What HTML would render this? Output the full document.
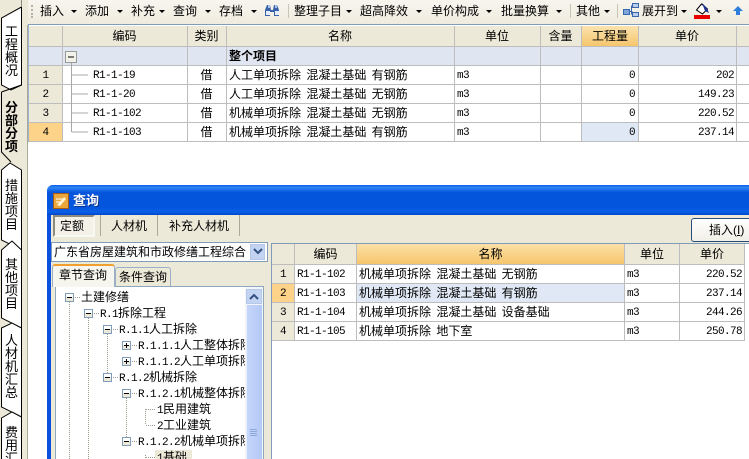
<!DOCTYPE html>
<html><head><meta charset="utf-8"><style>
html,body{margin:0;padding:0;width:749px;height:459px;overflow:hidden}
body{position:relative;background:#fff;font:12px/14px "Liberation Sans","WenQuanYi Zen Hei","Noto Sans CJK SC",sans-serif;color:#000}
div,span{position:absolute;white-space:nowrap}
svg{position:absolute}
.m{font-family:"Liberation Mono","WenQuanYi Zen Hei",monospace;font-size:11px;letter-spacing:-.6px}
.s{position:static}
.h{background:#ece9d8}
.c{text-align:center}
.r{text-align:right}
.ln{background:#bdbdbd}
.vt{left:5px;width:13px;font-family:"WenQuanYi Zen Hei","Noto Sans CJK SC",sans-serif;line-height:13px;font-size:13px;white-space:normal;text-align:center}
#wrap{left:0;top:0;width:749px;height:459px;overflow:hidden}
</style></head><body><div id="wrap">

<!-- toolbar -->
<div style="left:28px;top:0;width:721px;height:24px;background:linear-gradient(#f7f5ee,#efecdf)"></div>
<div style="left:28px;top:24px;width:721px;height:1px;background:#7f9db9"></div>
<svg width="749" height="24" style="left:0;top:0">
<g fill="#b5b2a4"><rect x="31" y="5" width="2" height="2"/><rect x="31" y="9" width="2" height="2"/><rect x="31" y="13" width="2" height="2"/><rect x="31" y="16" width="2" height="2"/></g>
<g fill="#000"><path d="M71 10h6l-3 3z"/><path d="M117 10h6l-3 3z"/><path d="M159 10h6l-3 3z"/><path d="M205 10h6l-3 3z"/><path d="M251 10h6l-3 3z"/><path d="M346 10h6l-3 3z"/><path d="M416 10h6l-3 3z"/><path d="M486 10h6l-3 3z"/><path d="M556 10h6l-3 3z"/><path d="M604 10h6l-3 3z"/><path d="M681 10h6l-3 3z"/><path d="M716 10h6l-3 3z"/></g>
<g fill="#c8c5b6"><rect x="288" y="4" width="1" height="14"/><rect x="570" y="4" width="1" height="14"/><rect x="617" y="4" width="1" height="14"/></g>
<!-- binoculars -->
<path d="M265 16v-6l2-5h3l1 5h2l1-5h3l2 5v6h-5v-4h-4v4z" fill="#3a62a8"/><rect x="266" y="11" width="4" height="4" fill="#e4edf9"/><rect x="275" y="11" width="4" height="4" fill="#e4edf9"/><rect x="268" y="5" width="2" height="3" fill="#a9c4ea"/><rect x="275" y="5" width="2" height="3" fill="#a9c4ea"/>
<!-- tree icon -->
<rect x="623.5" y="9.5" width="6" height="5" fill="#7fa6dc" stroke="#3a66ad"/><rect x="632.5" y="3.5" width="6" height="4" fill="#b9cdec" stroke="#3a66ad"/><rect x="632.5" y="12.5" width="6" height="4" fill="#b9cdec" stroke="#3a66ad"/><path d="M630 11.5h2.5M631.5 5.5v9" stroke="#3a66ad" fill="none"/>
<!-- paint bucket -->
<path d="M696.5 10l5-6 6 5-5 5z" fill="#fff" stroke="#000"/><path d="M702 3l5 5 2 5-4-2z" fill="#1d2f8a"/><rect x="694" y="15" width="16" height="4" fill="#e80000"/>
<!-- up arrow -->
<path d="M738 6l-5 5h3v4h4v-4h3z" fill="#2e7fdc"/>
</svg>
<div style="left:40px;top:4px">插入</div>
<div style="left:85px;top:4px">添加</div>
<div style="left:131px;top:4px">补充</div>
<div style="left:173px;top:4px">查询</div>
<div style="left:219px;top:4px">存档</div>
<div style="left:294px;top:4px">整理子目</div>
<div style="left:360px;top:4px">超高降效</div>
<div style="left:431px;top:4px">单价构成</div>
<div style="left:501px;top:4px">批量换算</div>
<div style="left:576px;top:4px">其他</div>
<div style="left:642px;top:4px">展开到</div>

<!-- left tabs -->
<div style="left:0;top:0;width:28px;height:459px;background:#ece9d8"></div>
<div style="left:27px;top:25px;width:1px;height:434px;background:#a9a99a"></div>
<svg width="28" height="459" style="left:0;top:0">
<path d="M21.5 7L1.5 18V85L11 90 21.5 85z" fill="#fff" stroke="#000"/>
<path d="M21.5 0V7" stroke="#8a8a80"/>
<path d="M21.5 85L1.5 92" fill="none" stroke="#000"/>
<path d="M1.5 92V152L11 162" fill="none" stroke="#000"/>
<path d="M1.5 170L10 163 21.5 170V250L1.5 240z" fill="#fff" stroke="#000"/>
<path d="M1.5 250L12 241 21.5 250V328L1.5 318z" fill="#fff" stroke="#000"/>
<path d="M1.5 328L12 323 21.5 328V417L1.5 407z" fill="#fff" stroke="#000"/>
<path d="M1.5 418L12 412 21.5 417V470H1.5z" fill="#fff" stroke="#000"/>
</svg>
<div class="vt" style="top:24px">工程概况</div>
<div class="vt" style="top:100px;font-weight:bold">分部分项</div>
<div class="vt" style="top:178px">措施项目</div>
<div class="vt" style="top:257px">其他项目</div>
<div class="vt" style="top:333px">人材机汇总</div>
<div class="vt" style="top:425px">费用汇总</div>

<!-- main grid -->
<div class="h" style="left:29px;top:26px;width:720px;height:20px"></div>
<div style="left:29px;top:47px;width:720px;height:18px;background:#dfe6f1"></div>
<div class="h" style="left:29px;top:66px;width:33px;height:56px"></div>
<div style="left:29px;top:123px;width:33px;height:18px;background:#fdd38a"></div>
<div style="left:582px;top:26px;width:56px;height:20px;background:linear-gradient(#fbe3ae,#f6c66d)"></div>
<div style="left:582px;top:123px;width:56px;height:18px;background:#dfe8f4"></div>
<div style="left:28px;top:25px;width:1px;height:117px;background:#9db4cf"></div>
<div class="ln" style="left:29px;top:46px;width:720px;height:1px"></div>
<div class="ln" style="left:29px;top:65px;width:720px;height:1px"></div>
<div class="ln" style="left:29px;top:84px;width:720px;height:1px"></div>
<div class="ln" style="left:29px;top:103px;width:720px;height:1px"></div>
<div class="ln" style="left:29px;top:122px;width:720px;height:1px"></div>
<div class="ln" style="left:29px;top:141px;width:720px;height:1px"></div>
<div class="ln" style="left:62px;top:26px;width:1px;height:116px"></div>
<div class="ln" style="left:187px;top:26px;width:1px;height:116px"></div>
<div class="ln" style="left:226px;top:26px;width:1px;height:116px"></div>
<div class="ln" style="left:454px;top:26px;width:1px;height:116px"></div>
<div class="ln" style="left:540px;top:26px;width:1px;height:116px"></div>
<div class="ln" style="left:581px;top:26px;width:1px;height:116px"></div>
<div class="ln" style="left:638px;top:26px;width:1px;height:116px"></div>
<div class="ln" style="left:736px;top:26px;width:1px;height:116px"></div>
<div class="c" style="left:62px;top:29px;width:125px">编码</div>
<div class="c" style="left:187px;top:29px;width:39px">类别</div>
<div class="c" style="left:226px;top:29px;width:228px">名称</div>
<div class="c" style="left:454px;top:29px;width:86px">单位</div>
<div class="c" style="left:540px;top:29px;width:41px">含量</div>
<div class="c" style="left:582px;top:29px;width:56px">工程量</div>
<div class="c" style="left:638px;top:29px;width:98px">单价</div>
<svg width="60" height="90" style="left:62px;top:50px">
<rect x="3.5" y="1.5" width="11" height="11" fill="#f2f2ea" stroke="#9a9a9a"/><path d="M6 7h6" stroke="#000"/>
<path d="M9.5 13V82M9.5 25H26M9.5 44H26M9.5 63H26M9.5 82H26" stroke="#a8a8a8" fill="none"/>
</svg>
<div style="left:229px;top:49px;font-weight:bold">整个项目</div>

<div class="m c" style="left:29px;top:69px;width:33px">1</div>
<div class="m c" style="left:29px;top:88px;width:33px">2</div>
<div class="m c" style="left:29px;top:107px;width:33px">3</div>
<div class="m c" style="left:29px;top:126px;width:33px">4</div>
<div class="m" style="left:93px;top:69px">R1-1-19</div>
<div class="m" style="left:93px;top:88px">R1-1-20</div>
<div class="m" style="left:93px;top:107px">R1-1-102</div>
<div class="m" style="left:93px;top:126px">R1-1-103</div>
<div class="c" style="left:187px;top:68px;width:39px">借</div>
<div class="c" style="left:187px;top:87px;width:39px">借</div>
<div class="c" style="left:187px;top:106px;width:39px">借</div>
<div class="c" style="left:187px;top:125px;width:39px">借</div>
<div style="left:229px;top:68px;word-spacing:2px">人工单项拆除 混凝土基础 有钢筋</div>
<div style="left:229px;top:87px;word-spacing:2px">人工单项拆除 混凝土基础 无钢筋</div>
<div style="left:229px;top:106px;word-spacing:2px">机械单项拆除 混凝土基础 无钢筋</div>
<div style="left:229px;top:125px;word-spacing:2px">机械单项拆除 混凝土基础 有钢筋</div>
<div class="m" style="left:457px;top:69px">m3</div>
<div class="m" style="left:457px;top:88px">m3</div>
<div class="m" style="left:457px;top:107px">m3</div>
<div class="m" style="left:457px;top:126px">m3</div>
<div class="m r" style="left:582px;top:69px;width:53px">0</div>
<div class="m r" style="left:582px;top:88px;width:53px">0</div>
<div class="m r" style="left:582px;top:107px;width:53px">0</div>
<div class="m r" style="left:582px;top:126px;width:53px">0</div>
<div class="m r" style="left:638px;top:69px;width:96px">202</div>
<div class="m r" style="left:638px;top:88px;width:96px">149.23</div>
<div class="m r" style="left:638px;top:107px;width:96px">220.52</div>
<div class="m r" style="left:638px;top:126px;width:96px">237.14</div>

<!-- dialog -->
<div style="left:47px;top:185px;width:702px;height:274px;background:#0a50dc;border-radius:6px 0 0 0"></div>
<div style="left:47px;top:185px;width:702px;height:30px;background:linear-gradient(#0a5ee6 0,#2f86f5 8%,#0454dc 25%,#0455de 75%,#0a5fe8 90%,#0046c8 100%);border-radius:6px 0 0 0"></div>
<div style="left:51px;top:215px;width:698px;height:244px;background:#ece9d8"></div>
<svg width="18" height="18" style="left:53px;top:193px"><rect x=".5" y=".5" width="15" height="15" fill="#e8a63c" stroke="#a85a10"/><path d="M4 12l7-8 2 2-6 7z" fill="#fff3d0"/><path d="M3 6h6M3 9h4" stroke="#fff"/></svg>
<div style="left:73px;top:194px;color:#fff;font-weight:bold;font-size:13px;text-shadow:1px 1px 0 #003090">查询</div>

<!-- dialog tabs -->
<div style="left:53px;top:215px;background:#f4f2e8;border:2px solid;border-color:#8d8b80 #f8f8f2 #f8f8f2 #8d8b80;width:38px;height:18px"></div>
<div style="left:60px;top:219px">定额</div>
<div style="left:100px;top:215px;width:1px;height:21px;background:#aaa99c"></div>
<div style="left:111px;top:219px">人材机</div>
<div style="left:157px;top:215px;width:1px;height:21px;background:#aaa99c"></div>
<div style="left:169px;top:219px">补充人材机</div>
<div style="left:239px;top:215px;width:1px;height:21px;background:#aaa99c"></div>

<!-- insert button -->
<div style="left:691px;top:218px;width:70px;height:22px;background:linear-gradient(#fff,#f1efe6);border:1px solid #274c7c;border-radius:3px"></div>
<div style="left:709px;top:223px">插入<span class="s">(<u>I</u>)</span></div>

<!-- combo -->
<div style="left:51px;top:242px;width:215px;height:18px;background:#fff;border:1px solid #7f9db9"></div>
<div style="left:54px;top:245px;width:192px;overflow:hidden">广东省房屋建筑和市政修缮工程综合</div>
<div style="left:250px;top:244px;width:15px;height:16px;background:#c3d4f3;border:1px solid #b6c8ea;box-sizing:border-box"></div>
<svg width="12" height="10" style="left:252px;top:247px"><path d="M2 2l4 4 4-4" fill="none" stroke="#34507f" stroke-width="2"/></svg>

<!-- left sub tabs -->
<div style="left:55px;top:286px;width:209px;height:173px;background:#fff;border:1px solid #8da7bf;box-sizing:border-box"></div>
<div style="left:52px;top:264px;width:63px;height:23px;background:#f7f6ee;border:1px solid #9bb0c4;border-top:2px solid #f0a030;border-bottom:0;border-radius:3px 3px 0 0;box-sizing:border-box"></div>
<div style="left:115px;top:267px;width:56px;height:19px;background:#ece9d8;border:1px solid #9bb0c4;border-bottom:0;border-radius:3px 3px 0 0;box-sizing:border-box"></div>
<div style="left:59px;top:268px">章节查询</div>
<div style="left:119px;top:270px">条件查询</div>

<!-- tree -->
<div style="left:56px;top:287px;width:189px;height:172px;overflow:hidden;background:#fff">
<svg width="189" height="172" style="left:0;top:0">
<g stroke="#9c9a8c" stroke-dasharray="1 1" fill="none">
<path d="M13.5 15V172M32.5 31V172M51.5 47V91M70.5 111V158M89.5 122V138M89.5 168V172"/>
<path d="M90 122.5h9M90 138.5h9M90 170.5h9"/>
<path d="M19 10.5h5M38 26.5h5M57 42.5h5M76 58.5h5M76 74.5h5M57 90.5h5M76 106.5h5M76 154.5h5"/>
</g>
</svg>
<svg width="189" height="172" style="left:0;top:0">
<defs><g id="b"><rect x=".5" y=".5" width="8" height="8" fill="#ece9d8" stroke="#7f9db9"/><rect x="1" y="1" width="7" height="3" fill="#fff"/><path d="M2 4.5h5" stroke="#000"/></g>
<g id="p"><use href="#b"/><path d="M4.5 2v5" stroke="#000"/></g></defs>
<use href="#b" x="9" y="6"/><use href="#b" x="28" y="22"/><use href="#b" x="47" y="38"/><use href="#p" x="66" y="54"/><use href="#p" x="66" y="70"/><use href="#b" x="47" y="86"/><use href="#b" x="66" y="102"/><use href="#b" x="66" y="150"/>
</svg>
<div style="left:25px;top:3px">土建修缮</div>
<div style="left:44px;top:19px"><span class="m s">R.1</span>拆除工程</div>
<div style="left:63px;top:35px"><span class="m s">R.1.1</span>人工拆除</div>
<div style="left:82px;top:51px"><span class="m s">R.1.1.1</span>人工整体拆除</div>
<div style="left:82px;top:67px"><span class="m s">R.1.1.2</span>人工单项拆除</div>
<div style="left:63px;top:83px"><span class="m s">R.1.2</span>机械拆除</div>
<div style="left:82px;top:99px"><span class="m s">R.1.2.1</span>机械整体拆除</div>
<div style="left:101px;top:115px"><span class="m s">1</span>民用建筑</div>
<div style="left:101px;top:131px"><span class="m s">2</span>工业建筑</div>
<div style="left:82px;top:147px"><span class="m s">R.1.2.2</span>机械单项拆除</div>
<div style="left:99px;top:163px;width:37px;height:12px;background:#ece9d8"></div>
<div style="left:101px;top:163px"><span class="m s">1</span>基础</div>
</div>

<!-- tree scrollbar -->
<div style="left:245px;top:287px;width:18px;height:172px;background:#f4f4fb"></div>
<div style="left:246px;top:289px;width:16px;height:15px;background:#c3d4f3;border:1px solid #b6c8ea;box-sizing:border-box"></div>
<svg width="12" height="10" style="left:248px;top:292px"><path d="M2 7l4-4 4 4" fill="none" stroke="#34507f" stroke-width="2"/></svg>
<div style="left:246px;top:305px;width:16px;height:154px;background:linear-gradient(90deg,#c5d6fb,#b4c9f6);border-left:1px solid #e8eefc;box-sizing:border-box"></div>
<svg width="8" height="8" style="left:250px;top:429px"><path d="M0 .5h7M0 2.5h7M0 4.5h7M0 6.5h7" stroke="#8fa8dc"/></svg>

<!-- right grid -->
<div style="left:271px;top:243px;width:478px;height:216px;background:#fff;border-top:1px solid #7f9db9;border-left:1px solid #7f9db9;box-sizing:border-box"></div>
<div class="h" style="left:272px;top:244px;width:473px;height:20px"></div>
<div class="h" style="left:272px;top:265px;width:22px;height:75px"></div>
<div style="left:272px;top:284px;width:22px;height:18px;background:#fdd38a"></div>
<div style="left:357px;top:244px;width:267px;height:20px;background:linear-gradient(#fbe0a6,#f6c66d)"></div>
<div style="left:357px;top:284px;width:267px;height:18px;background:#dfe8f4"></div>
<div class="ln" style="left:272px;top:264px;width:473px;height:1px"></div>
<div class="ln" style="left:272px;top:283px;width:473px;height:1px"></div>
<div class="ln" style="left:272px;top:302px;width:473px;height:1px"></div>
<div class="ln" style="left:272px;top:321px;width:473px;height:1px"></div>
<div class="ln" style="left:272px;top:340px;width:473px;height:1px"></div>
<div class="ln" style="left:294px;top:244px;width:1px;height:97px"></div>
<div class="ln" style="left:356px;top:244px;width:1px;height:97px"></div>
<div class="ln" style="left:624px;top:244px;width:1px;height:97px"></div>
<div class="ln" style="left:679px;top:244px;width:1px;height:97px"></div>
<div class="ln" style="left:744px;top:244px;width:1px;height:97px"></div>
<div class="c" style="left:295px;top:247px;width:61px">编码</div>
<div class="c" style="left:357px;top:247px;width:267px">名称</div>
<div class="c" style="left:625px;top:247px;width:54px">单位</div>
<div class="c" style="left:680px;top:247px;width:64px">单价</div>
<div class="m c" style="left:272px;top:268px;width:22px">1</div>
<div class="m c" style="left:272px;top:287px;width:22px">2</div>
<div class="m c" style="left:272px;top:306px;width:22px">3</div>
<div class="m c" style="left:272px;top:325px;width:22px">4</div>
<div class="m" style="left:297px;top:268px">R1-1-102</div>
<div class="m" style="left:297px;top:287px">R1-1-103</div>
<div class="m" style="left:297px;top:306px">R1-1-104</div>
<div class="m" style="left:297px;top:325px">R1-1-105</div>
<div style="left:359px;top:267px;word-spacing:2px">机械单项拆除 混凝土基础 无钢筋</div>
<div style="left:359px;top:286px;word-spacing:2px">机械单项拆除 混凝土基础 有钢筋</div>
<div style="left:359px;top:305px;word-spacing:2px">机械单项拆除 混凝土基础 设备基础</div>
<div style="left:359px;top:324px;word-spacing:2px">机械单项拆除 地下室</div>
<div class="m" style="left:627px;top:268px">m3</div>
<div class="m" style="left:627px;top:287px">m3</div>
<div class="m" style="left:627px;top:306px">m3</div>
<div class="m" style="left:627px;top:325px">m3</div>
<div class="m r" style="left:680px;top:268px;width:62px">220.52</div>
<div class="m r" style="left:680px;top:287px;width:62px">237.14</div>
<div class="m r" style="left:680px;top:306px;width:62px">244.26</div>
<div class="m r" style="left:680px;top:325px;width:62px">250.78</div>
</div></body></html>
